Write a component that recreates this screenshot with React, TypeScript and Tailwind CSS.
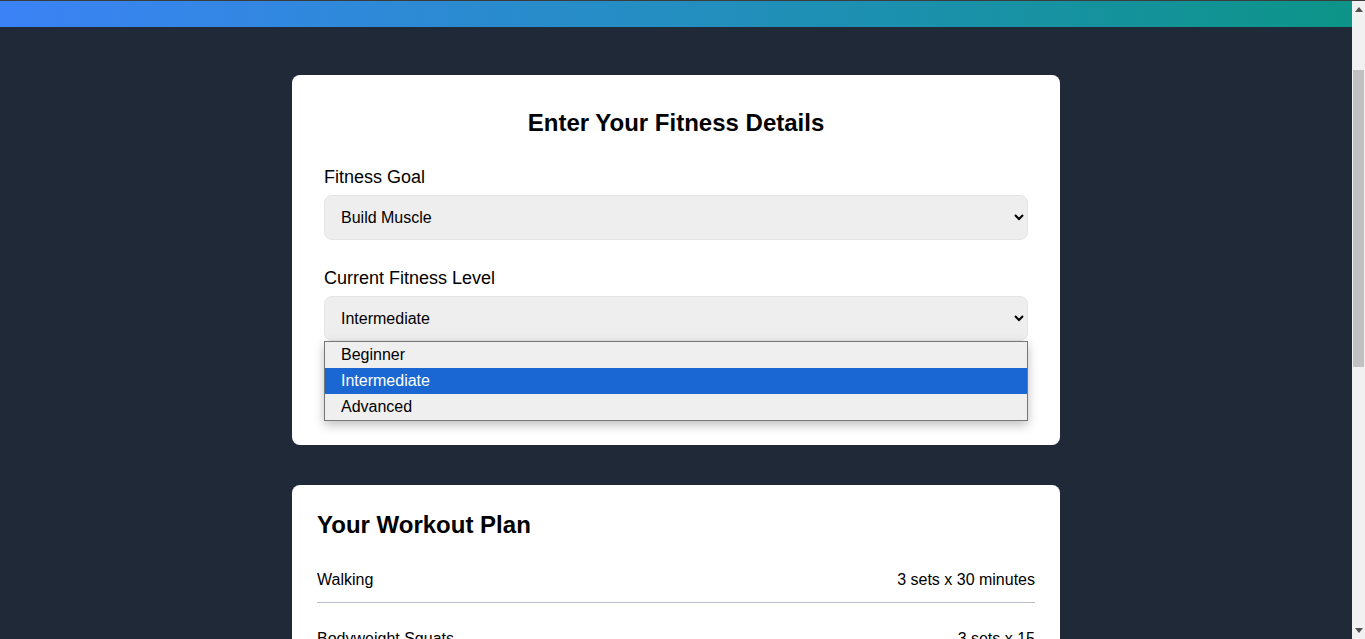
import React from "react";

const rows: [string, string][] = [
  ["Walking", "3 sets x 30 minutes"],
  ["Bodyweight Squats", "3 sets x 15"],
  ["Push-ups", "3 sets x 12"],
  ["Lunges", "3 sets x 12 each leg"],
  ["Plank", "3 sets x 45 seconds"],
  ["Dumbbell Rows", "3 sets x 12"],
  ["Jumping Jacks", "3 sets x 1 minute"],
  ["Stretching", "10 minutes"],
];

function Scrollbar() {
  return (
    <div className="flex w-[13px] shrink-0 flex-col bg-[#f1f1f1]">
      <div className="flex h-[17px] shrink-0 items-center justify-center">
        <svg width="8" height="5" viewBox="0 0 8 5">
          <path d="M0 5 L4 0 L8 5 Z" fill="#505050" />
        </svg>
      </div>
      <div className="flex-1 px-[1px]">
        <div className="mt-[52px] h-[297px] bg-[#c1c1c1]" />
      </div>
      <div className="flex h-[17px] shrink-0 items-center justify-center">
        <svg width="8" height="5" viewBox="0 0 8 5">
          <path d="M0 0 L4 5 L8 0 Z" fill="#505050" />
        </svg>
      </div>
    </div>
  );
}

export default function App() {
  return (
    <div
      className="flex h-screen flex-col overflow-hidden bg-[#1f2937] text-black"
      style={{ fontFamily: '"Liberation Sans", Arial, sans-serif' }}
    >
      <div className="h-px shrink-0 bg-[#3c3c3c]" />
      <div className="flex min-h-0 flex-1">
        <div className="min-w-0 flex-1 overflow-hidden">
          <div className="h-[26px] bg-linear-to-r from-[#3b82f6] to-[#0d9488]" />
          <main className="py-12">
            <div className="mx-auto max-w-3xl">
              <section className="rounded-lg bg-white p-8">
                <h2 className="mb-6 text-center text-2xl font-bold">Enter Your Fitness Details</h2>
                <div className="mb-6">
                  <label className="mb-1 block text-lg">Fitness Goal</label>
                  <select
                    defaultValue="muscle"
                    className="block h-[45px] w-full rounded-lg border border-[#e4e4e4] bg-[#eeeeee] px-3 text-base text-black"
                  >
                    <option value="loss">Lose Weight</option>
                    <option value="muscle">Build Muscle</option>
                    <option value="endurance">Improve Endurance</option>
                  </select>
                </div>
                <div className="relative mb-6">
                  <label className="mb-1 block text-lg">Current Fitness Level</label>
                  <select
                    defaultValue="intermediate"
                    className="block h-[45px] w-full rounded-lg border border-[#e4e4e4] bg-[#eeeeee] px-3 text-base text-black"
                  >
                    <option value="beginner">Beginner</option>
                    <option value="intermediate">Intermediate</option>
                    <option value="advanced">Advanced</option>
                  </select>
                  <ul className="absolute left-0 right-0 top-full z-10 border border-[#767676] bg-[#efefef] text-base shadow-[0_4px_10px_rgba(0,0,0,0.25)]">
                    <li className="flex h-[26px] items-center px-4">Beginner</li>
                    <li className="flex h-[26px] items-center bg-[#1a67d3] px-4 text-white">Intermediate</li>
                    <li className="flex h-[26px] items-center px-4">Advanced</li>
                  </ul>
                </div>
                <button className="block h-12 w-full rounded-lg bg-[#3b82f6] text-base font-semibold text-white">
                  Generate Workout Plan
                </button>
              </section>

              <section className="mt-10 rounded-lg bg-white px-[25px] py-6">
                <h2 className="mb-[15px] text-2xl font-bold">Your Workout Plan</h2>
                <div className="flex flex-col gap-3">
                  {rows.map(([name, detail]) => (
                    <div
                      key={name}
                      className="flex items-center justify-between border-b border-[#b9bdc9] pb-[10px] pt-[12px] text-base"
                    >
                      <span>{name}</span>
                      <span>{detail}</span>
                    </div>
                  ))}
                </div>
              </section>
            </div>
          </main>
        </div>
        <Scrollbar />
      </div>
    </div>
  );
}
